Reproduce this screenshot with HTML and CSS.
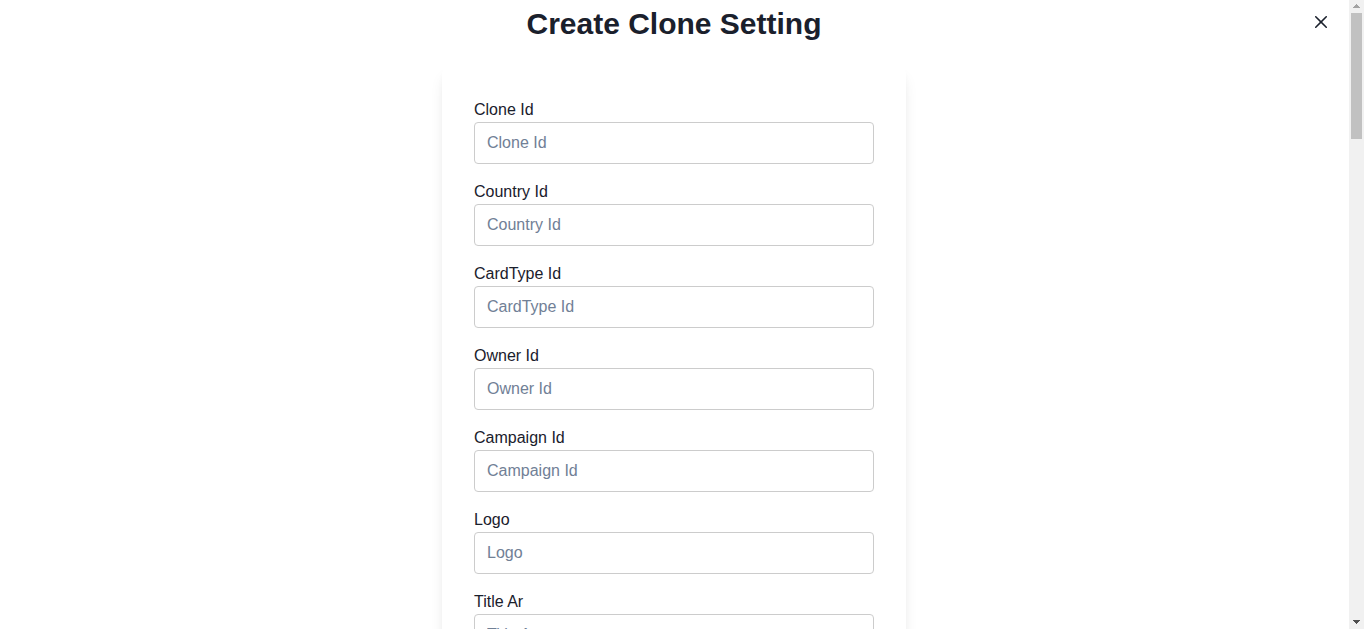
FILE: index.html
```html
<!DOCTYPE html>
<html lang="en">
<head>
<meta charset="utf-8">
<meta name="viewport" content="width=device-width, initial-scale=1">
<title>Create Clone Setting</title>
<link rel="stylesheet" href="styles.css">
</head>
<body>
<div class="dialog">
  <main class="content">
    <header class="header">
      <h1 class="title">Create Clone Setting</h1>
      <button class="close" type="button" aria-label="Close">
        <svg viewBox="0 0 24 24" width="12" height="12" aria-hidden="true"><path fill="currentColor" d="M.439,21.44a1.5,1.5,0,0,0,2.122,2.121L11.823,14.3a.25.25,0,0,1,.354,0l9.262,9.263a1.5,1.5,0,1,0,2.122-2.121L14.3,12.177a.25.25,0,0,1,0-.354l9.263-9.262A1.5,1.5,0,0,0,21.439.44L12.177,9.7a.25.25,0,0,1-.354,0L2.561.44A1.5,1.5,0,0,0,.439,2.561L9.7,11.823a.25.25,0,0,1,0,.354Z"/></svg>
      </button>
    </header>
    <form class="card">
      <div class="field"><label for="clone">Clone Id</label><input id="clone" type="text" placeholder="Clone Id"></div>
      <div class="field"><label for="country">Country Id</label><input id="country" type="text" placeholder="Country Id"></div>
      <div class="field"><label for="cardtype">CardType Id</label><input id="cardtype" type="text" placeholder="CardType Id"></div>
      <div class="field"><label for="owner">Owner Id</label><input id="owner" type="text" placeholder="Owner Id"></div>
      <div class="field"><label for="campaign">Campaign Id</label><input id="campaign" type="text" placeholder="Campaign Id"></div>
      <div class="field"><label for="logo">Logo</label><input id="logo" type="text" placeholder="Logo"></div>
      <div class="field"><label for="title-ar">Title Ar</label><input id="title-ar" type="text" placeholder="Title Ar"></div>
    </form>
  </main>
  <div class="scrollbar" aria-hidden="true">
    <svg class="arrow arrow-up" viewBox="0 0 15 13" width="15" height="13"><path d="M7 4h1v1h1v1h1v1h1v1H4V7h1V6h1V5h1z"/></svg>
    <div class="track"><div class="thumb"></div></div>
    <svg class="arrow" viewBox="0 0 15 13" width="15" height="13"><path d="M4 4h7v1h-1v1H9v1H8v1H7V7H6V6H5V5H4z"/></svg>
  </div>
</div>
</body>
</html>
```
FILE: styles.css
```css
* {
  box-sizing: border-box;
}

body {
  margin: 0;
  background: #fff;
  color: #1a202c;
  font: 16px/24px "Liberation Sans", Arial, sans-serif;
}

.dialog {
  display: flex;
  height: 100vh;
  overflow: hidden;
}

.content {
  flex: 1;
  min-width: 0;
  padding-right: 1px;
}

.header {
  position: relative;
  padding: 4px 24px;
  text-align: center;
}

.title {
  margin: 0;
  font-size: 30px;
  line-height: 40px;
}

.close {
  position: absolute;
  top: 6px;
  right: 11px;
  display: flex;
  align-items: center;
  justify-content: center;
  width: 32px;
  height: 32px;
  padding: 0;
  border: 0;
  border-radius: 6px;
  background: none;
  color: inherit;
}

.card {
  display: flex;
  flex-direction: column;
  gap: 16px;
  max-width: 464px;
  margin: 18px auto 0;
  padding: 32px;
  border-radius: 8px;
  background: #fff;
  box-shadow: 0 10px 15px -3px rgba(0, 0, 0, 0.1), 0 4px 6px -2px rgba(0, 0, 0, 0.05);
}

.field {
  display: flex;
  flex-direction: column;
}

.field input {
  width: 100%;
  height: 42px;
  padding: 0 12px;
  border: 1px solid #ccc;
  border-radius: 4px;
  background: #fff;
  color: inherit;
  font: inherit;
}

.field input::placeholder {
  color: #718096;
  opacity: 1;
}

.scrollbar {
  display: flex;
  flex-direction: column;
  width: 15px;
  background: #f1f1f1;
}

.arrow {
  display: block;
  fill: #505050;
}

.arrow-up {
  fill: #a3a3a3;
}

.track {
  flex: 1;
  padding: 0 2px;
}

.thumb {
  height: 20.9%;
  background: #c1c1c1;
}
```
